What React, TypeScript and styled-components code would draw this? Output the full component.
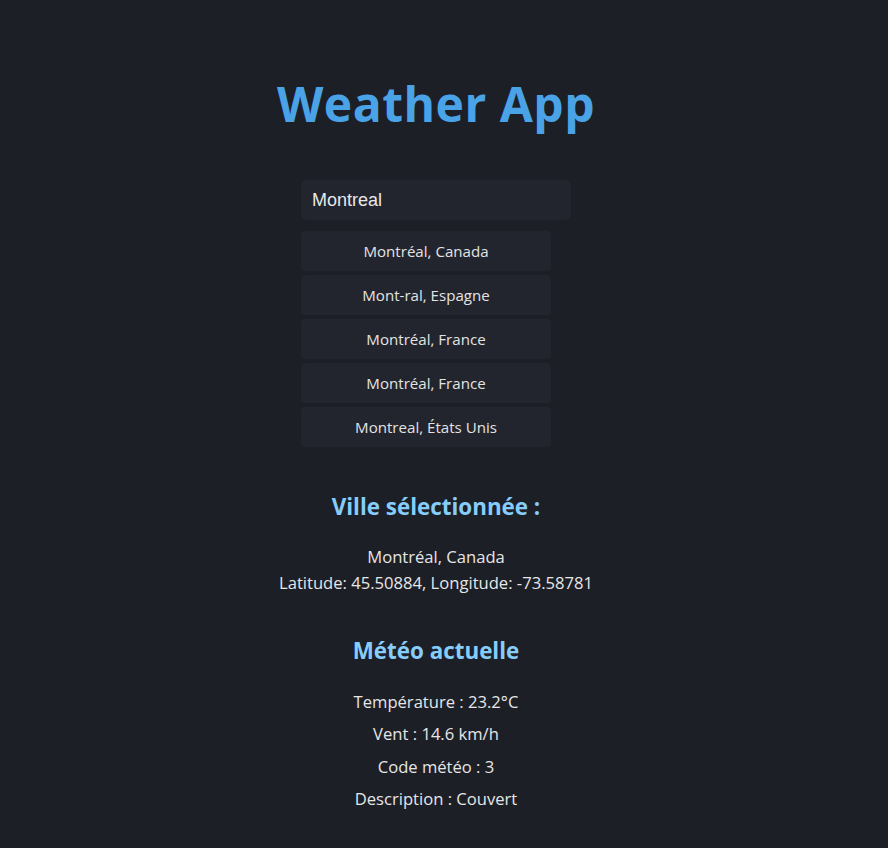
import React from "react";
import styled, { createGlobalStyle } from "styled-components";

const Global = createGlobalStyle`
  html, body { margin: 0; padding: 0; background: #1d1f27; }
  body { font-family: "Open Sans", "Noto Sans", sans-serif; color: #e6e6e6; }
`;

const Page = styled.div`
  width: calc(100% - 16px);
  min-height: 848px;
  display: flex;
  flex-direction: column;
  align-items: center;
  padding-top: 72px;
  box-sizing: border-box;
`;

const Title = styled.h1`
  margin: 0 0 44px;
  font-size: 48px;
  line-height: 64px;
  font-weight: 700;
  color: #4aa3e6;
  letter-spacing: 0.5px;
`;

const SearchBox = styled.div`
  width: 270px;
  display: flex;
  flex-direction: column;
  align-items: flex-start;
  gap: 4px;
`;

const Input = styled.input`
  width: 270px;
  height: 40px;
  box-sizing: border-box;
  border: none;
  outline: none;
  border-radius: 5px;
  background: #22252e;
  color: #e8e8e8;
  font-family: "Liberation Sans", Arial, sans-serif;
  font-size: 18px;
  padding: 0 11px;
  margin-bottom: 7px;
`;

const Suggestion = styled.button`
  width: 250px;
  height: 40px;
  border: none;
  border-radius: 4px;
  background: #22252e;
  color: #e3e3e3;
  font-family: "Open Sans", "Noto Sans", sans-serif;
  font-size: 15.1px;
  cursor: pointer;
`;

const Section = styled.section<{ $top: number }>`
  display: flex;
  flex-direction: column;
  align-items: center;
  margin-top: ${(p) => p.$top}px;
`;

const Heading = styled.h2<{ $gap: number }>`
  margin: 0 0 ${(p) => p.$gap}px;
  font-size: 22.4px;
  font-weight: 700;
  color: #86cdfb;
  line-height: 30px;
`;

const InfoText = styled.p`
  margin: 0;
  font-size: 16.6px;
  line-height: 26px;
  text-align: center;
`;

const WeatherLine = styled.p`
  margin: 0;
  font-size: 16.6px;
  line-height: 32.4px;
`;

const suggestions = [
  "Montréal, Canada",
  "Mont-ral, Espagne",
  "Montréal, France",
  "Montréal, France",
  "Montreal, États Unis",
];

export default function App() {
  return (
    <>
      <Global />
      <Page>
        <Title>Weather App</Title>
        <SearchBox>
          <Input defaultValue="Montreal" />
          {suggestions.map((s, i) => (
            <Suggestion key={i}>{s}</Suggestion>
          ))}
        </SearchBox>
        <Section $top={45}>
          <Heading $gap={22}>Ville sélectionnée :</Heading>
          <InfoText>
            Montréal, Canada
            <br />
            Latitude: 45.50884, Longitude: -73.58781
          </InfoText>
        </Section>
        <Section $top={40}>
          <Heading $gap={20}>Météo actuelle</Heading>
          <WeatherLine>Température : 23.2°C</WeatherLine>
          <WeatherLine>Vent : 14.6 km/h</WeatherLine>
          <WeatherLine>Code météo : 3</WeatherLine>
          <WeatherLine>Description : Couvert</WeatherLine>
        </Section>
      </Page>
    </>
  );
}
